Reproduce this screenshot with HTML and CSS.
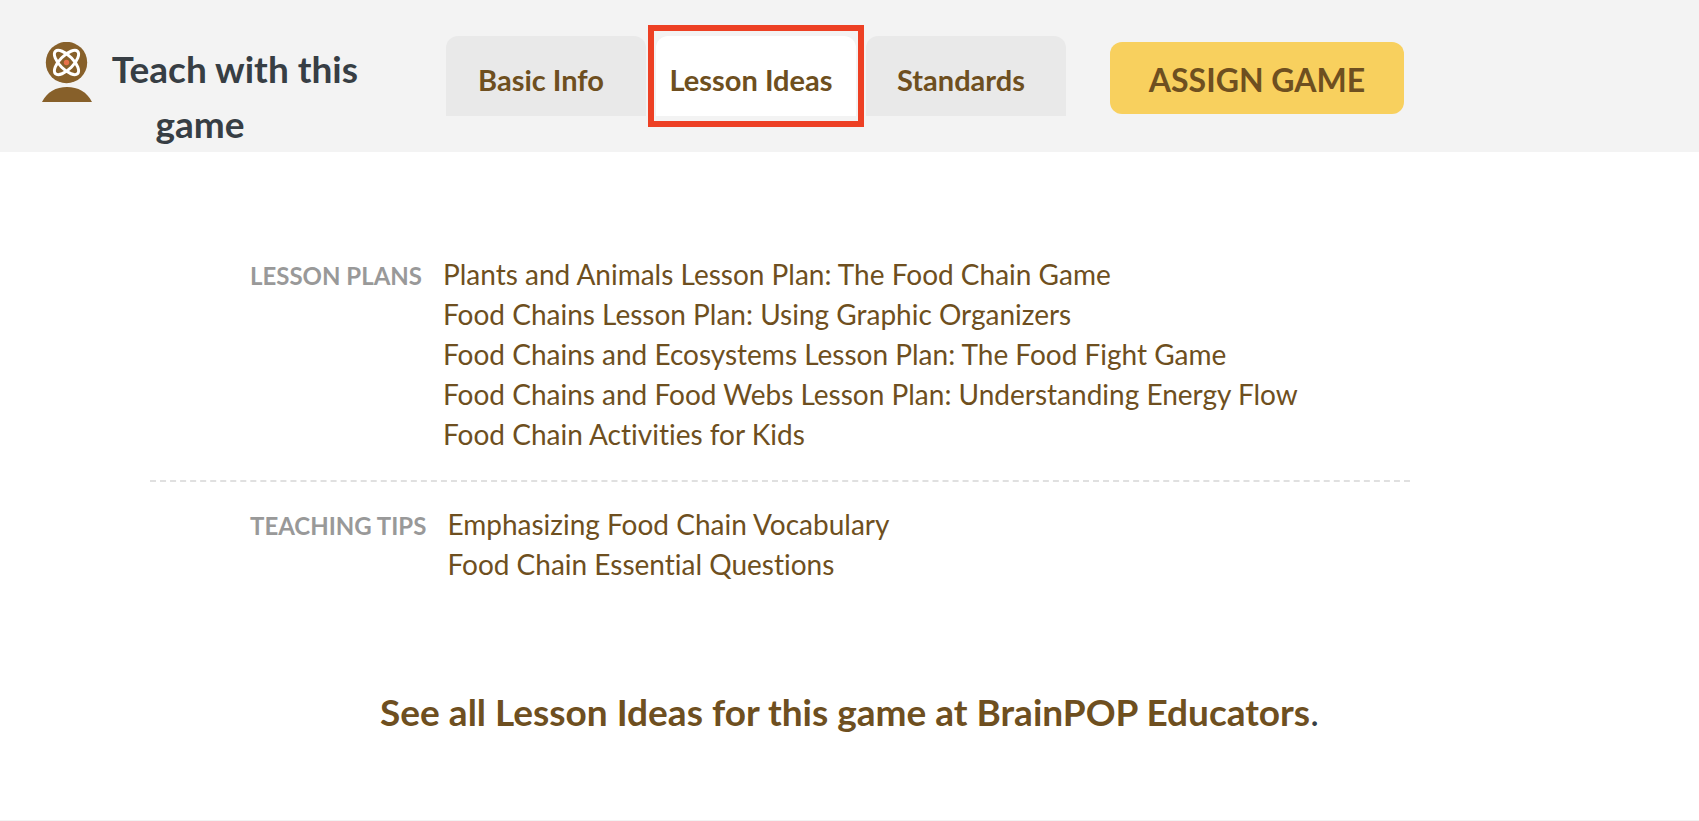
FILE: index.html
```html
<!DOCTYPE html>
<html lang="en">
<head>
<meta charset="UTF-8">
<meta name="viewport" content="width=device-width, initial-scale=1.0">
<title>Teach with this game</title>
<link rel="stylesheet" href="styles.css">
</head>
<body>
<header class="teach-bar">
    <h1 class="teach-title">
        <svg class="teach-icon" viewBox="0 0 50 60" aria-hidden="true">
            <circle cx="24.500" cy="20.500" r="20.700" fill="#87602a"/>
            <path d="M0 60C5 50 14 45 25 45s20 5 25 15z" fill="#87602a"/>
            <g fill="none" stroke="#fff" stroke-width="3">
                <ellipse cx="24.500" cy="20.500" rx="15.700" ry="6.800" transform="rotate(45 24.500 20.500)"/>
                <ellipse cx="24.500" cy="20.500" rx="15.700" ry="6.800" transform="rotate(-45 24.500 20.500)"/>
            </g>
            <circle cx="24.500" cy="20.500" r="2.700" fill="#e8714a"/>
        </svg>
        Teach with this game
    </h1>
    <nav class="tabs">
        <a class="tab" href="#">Basic Info</a>
        <a class="tab active" href="#">Lesson Ideas</a>
        <a class="tab" href="#">Standards</a>
    </nav>
    <button class="assign" type="button">ASSIGN GAME</button>
</header>
<main class="content">
    <section class="ideas">
        <h2>LESSON PLANS</h2>
        <ul>
            <li><a href="#">Plants and Animals Lesson Plan: The Food Chain Game</a></li>
            <li><a href="#">Food Chains Lesson Plan: Using Graphic Organizers</a></li>
            <li><a href="#">Food Chains and Ecosystems Lesson Plan: The Food Fight Game</a></li>
            <li><a href="#">Food Chains and Food Webs Lesson Plan: Understanding Energy Flow</a></li>
            <li><a href="#">Food Chain Activities for Kids</a></li>
        </ul>
    </section>
    <section class="ideas">
        <h2>TEACHING TIPS</h2>
        <ul>
            <li><a href="#">Emphasizing Food Chain Vocabulary</a></li>
            <li><a href="#">Food Chain Essential Questions</a></li>
        </ul>
    </section>
</main>
<p class="see-all"><a href="#">See all Lesson Ideas for this game at BrainPOP Educators</a>.</p>
</body>
</html>
```

FILE: styles.css
```css
* {
    box-sizing: border-box;
}
body {
    margin: 0;
    font-family: Lato, "Open Sans", sans-serif;
    font-size: 28px;
    font-variant-ligatures: none;
    line-height: 40px;
    color: #373e44;
    background-color: #fff;
    border-bottom: 1px solid #f2f2f2;
}
a {
    color: #6e4f20;
    text-decoration: none;
}

/* top bar */
.teach-bar {
    display: flex;
    align-items: flex-start;
    height: 152px;
    padding: 36px 40px 0 40px;
    background-color: #f3f3f3;
}
.teach-title {
    width: 320px;
    margin: 5px 86px 0 0;
    font-size: 37px;
    line-height: 55px;
    text-align: center;
}
.teach-icon {
    width: 50px;
    height: 60px;
    margin: 1px 12px -6px 0;
    vertical-align: top;
}
.tabs {
    display: flex;
    gap: 10px;
}
.tab {
    position: relative;
    width: 200px;
    height: 80px;
    padding: 5px 10px 0 0;
    border-radius: 12px 12px 0 0;
    background-color: #e9e9e9;
    font-weight: bold;
    font-size: 29px;
    line-height: 78px;
    text-align: center;
}
.active {
    background-color: #fff;
}
/* highlight frame around the open tab */
.active::after {
    content: "";
    position: absolute;
    inset: -11px -8px;
    border: 6px solid #ed4024;
}
.assign {
    width: 294px;
    height: 72px;
    margin: 6px 0 0 44px;
    padding: 2px 0 0;
    border: none;
    border-radius: 12px;
    background-color: #f8d05e;
    color: #6e4f20;
    font-family: inherit;
    font-size: 32px;
    font-weight: bold;
    cursor: pointer;
}

/* lesson lists */
.content {
    max-width: 1260px;
    margin: 80px 0 0 150px;
}
.ideas {
    display: flex;
    align-items: baseline;
    gap: 21px;
    padding: 22px 100px 26px;
}
.ideas + .ideas {
    border-top: 2px dashed #e0e0e0;
}
.ideas h2 {
    margin: 0;
    font-size: 24px;
    color: #999;
}
.ideas ul {
    margin: 0;
    padding: 0;
    list-style: none;
}
.see-all {
    margin: 82px 0 88px;
    font-size: 37px;
    text-align: center;
}
.see-all a {
    font-weight: bold;
}
```
